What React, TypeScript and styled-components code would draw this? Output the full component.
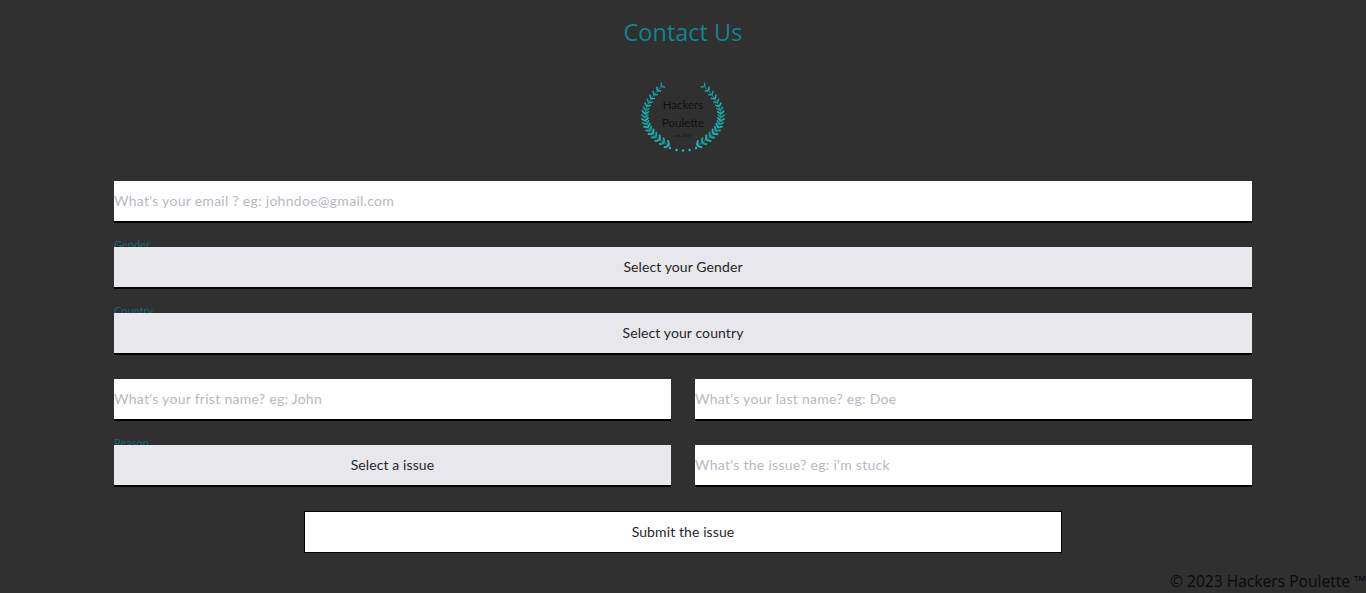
import React from "react";
import styled, { createGlobalStyle } from "styled-components";

const GlobalStyle = createGlobalStyle`
    html, body {
        margin: 0;
        padding: 0;
        background: #303030;
    }
    body {
        font-family: "Lato", "Liberation Sans", sans-serif;
    }
`;

const Pagina = styled.div`
    height: 593px;
    overflow: hidden;
    display: flex;
    flex-direction: column;
    align-items: center;
`;

const Titulo = styled.h1`
    margin: 18px 0 0;
    height: 29px;
    color: #0d868c;
    font-family: "Open Sans", sans-serif;
    font-size: 23.5px;
    font-weight: 400;
    line-height: 29px;
`;

const LogoBox = styled.svg`
    display: block;
    margin: 33px 0 27px;
`;

const Formulario = styled.form`
    width: 1138px;
    display: flex;
    flex-direction: column;
    align-items: center;
    gap: 24px;
`;

const Linha = styled.div`
    width: 100%;
    display: grid;
    grid-template-columns: 1fr 1fr;
    gap: 24px;
`;

const Grupo = styled.div`
    position: relative;
    width: 100%;
`;

const Rotulo = styled.label`
    position: absolute;
    top: -9px;
    left: 0;
    color: #0d6a70;
    font-size: 11px;
    line-height: 14px;
`;

const Campo = styled.input`
    display: block;
    box-sizing: border-box;
    width: 100%;
    height: 42px;
    padding: 0 0 2px;
    border: 0;
    border-bottom: 2px solid #000;
    border-radius: 0;
    outline: none;
    background: #fff;
    font-family: inherit;
    font-size: 14px;
    letter-spacing: 0.28px;

    &::placeholder {
        color: #b8b8c1;
        opacity: 1;
    }
`;

const Seletor = styled.button`
    position: relative;
    display: block;
    box-sizing: border-box;
    width: 100%;
    height: 42px;
    padding: 0 0 2px;
    border: 0;
    border-bottom: 2px solid #000;
    border-radius: 0;
    background: #e7e7ec;
    color: #262626;
    font-family: inherit;
    font-size: 14px;
    letter-spacing: 0.1px;
`;

const BotaoEnviar = styled.button`
    box-sizing: border-box;
    width: 758px;
    height: 42px;
    padding: 0 0 2px;
    border: 1px solid #000;
    border-radius: 0;
    background: #fff;
    color: #262626;
    font-family: inherit;
    font-size: 14px;
    letter-spacing: 0.1px;
`;

const Rodape = styled.footer`
    align-self: flex-end;
    margin-top: 18px;
    color: #0b0b0b;
    font-family: "Open Sans", sans-serif;
    font-size: 15.6px;
    line-height: 20px;
    white-space: nowrap;
`;

// ramo do louro: curva de bezier de baixo ate o topo, o outro lado e espelhado
const P0 = { x: 21, y: 6 };
const C = { x: -16, y: 41 };
const P2 = { x: 27, y: 65 };

const pontoDaCurva = (t: number) => {
    const u = 1 - t;
    return {
        x: u * u * P2.x + 2 * u * t * C.x + t * t * P0.x,
        y: u * u * P2.y + 2 * u * t * C.y + t * t * P0.y,
        dx: 2 * u * (C.x - P2.x) + 2 * t * (P0.x - C.x),
        dy: 2 * u * (C.y - P2.y) + 2 * t * (P0.y - C.y),
    };
};

const folhas = Array.from({ length: 18 }, (_, i) => {
    const t = i / 17;
    const p = pontoDaCurva(t);
    return {
        x: p.x,
        y: p.y,
        giro: (Math.atan2(p.dy, p.dx) * 180) / Math.PI + 90,
        tam: 1.05 - t * 0.3,
    };
});

const pontos = [
    { x: 29, y: 68 },
    { x: 35.5, y: 70 },
    { x: 42, y: 70.5 },
    { x: 48.5, y: 70 },
    { x: 55, y: 68 },
];

function Ramo() {
    return (
        <g fill="none" strokeLinecap="round">
            <path d={`M${P2.x} ${P2.y} Q${C.x} ${C.y} ${P0.x} ${P0.y}`} stroke="#128f8e" strokeWidth="1" />
            {folhas.map((f, i) => (
                <g
                    key={i}
                    transform={`translate(${f.x} ${f.y}) rotate(${f.giro}) scale(${f.tam})`}
                    stroke={i % 2 ? "#14a09e" : "#1ab6b1"}
                    strokeWidth="1.9"
                >
                    <path d="M-0.6 0.6 Q-2.2 -0.4 -3.4 -1.8" />
                    <path d="M0.6 0.6 Q2.2 -0.4 3.4 -1.8" />
                </g>
            ))}
        </g>
    );
}

function Logo() {
    return (
        <LogoBox width="84" height="74" viewBox="0 0 84 74" role="img" aria-label="Hackers Poulette">
            <Ramo />
            <g transform="translate(84 0) scale(-1 1)">
                <Ramo />
            </g>
            <g fill="#16c4bd">
                {pontos.map((p) => (
                    <circle key={p.x} cx={p.x} cy={p.y} r="1.2" />
                ))}
            </g>
            <g fill="#101010" textAnchor="middle" fontFamily="Lato, sans-serif">
                <text x="42" y="29" fontSize="11.5">Hackers</text>
                <text x="42" y="46.5" fontSize="11.5">Poulette</text>
                <text x="42" y="56.5" fontSize="4.4">est. 2017</text>
            </g>
        </LogoBox>
    );
}

export default function App() {
    return (
        <Pagina>
            <GlobalStyle />
            <Titulo>Contact Us</Titulo>
            <Logo />
            <Formulario onSubmit={(e) => e.preventDefault()}>
                <Grupo>
                    <Campo type="email" placeholder="What's your email ? eg: johndoe@gmail.com" />
                </Grupo>
                <Grupo>
                    <Rotulo>Gender</Rotulo>
                    <Seletor type="button">Select your Gender</Seletor>
                </Grupo>
                <Grupo>
                    <Rotulo>Country</Rotulo>
                    <Seletor type="button">Select your country</Seletor>
                </Grupo>
                <Linha>
                    <Campo type="text" placeholder="What's your frist name? eg: John" />
                    <Campo type="text" placeholder="What's your last name? eg: Doe" />
                </Linha>
                <Linha>
                    <Grupo>
                        <Rotulo>Reason</Rotulo>
                        <Seletor type="button">Select a issue</Seletor>
                    </Grupo>
                    <Campo type="text" placeholder="What's the issue? eg: i'm stuck" />
                </Linha>
                <BotaoEnviar type="submit">Submit the issue</BotaoEnviar>
            </Formulario>
            <Rodape>© 2023 Hackers Poulette ™</Rodape>
        </Pagina>
    );
}
